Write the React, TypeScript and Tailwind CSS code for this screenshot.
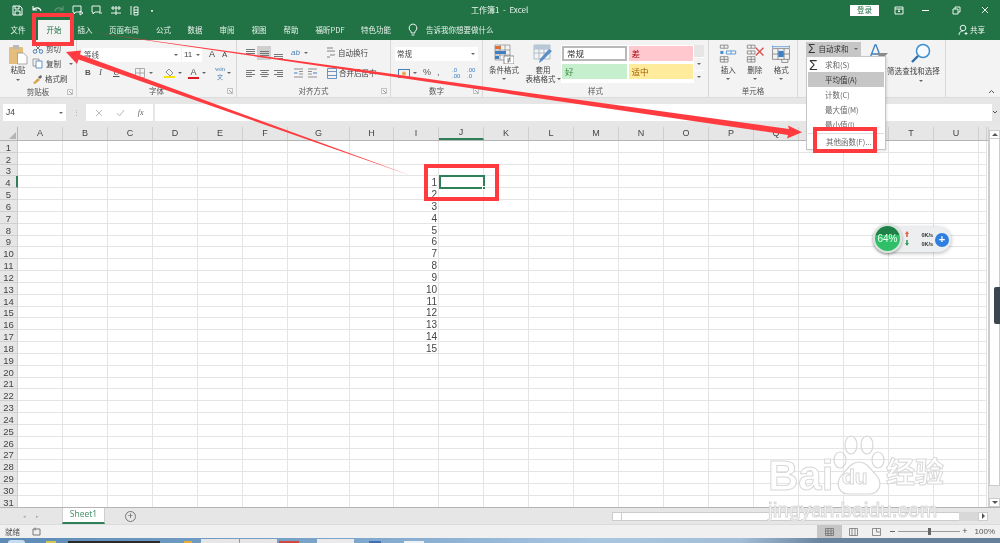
import React from "react";

const CJK = "font-['Noto_Sans_CJK_SC','Liberation_Sans',sans-serif]";
const colLabels = "ABCDEFGHIJKLMNOPQRSTUV".split("");
const colWidths = [45, 45, 45, 45, 45, 45, 62, 44, 45, 45, 45, 45, 45, 45, 45, 45, 45, 45, 45, 45, 45, 8];

const Ico = ({ w = 12, h = 12, children }: { w?: number; h?: number; children: React.ReactNode }) => (
  <svg width={w} height={h} viewBox={`0 0 ${w} ${h}`} fill="none" className="shrink-0">{children}</svg>
);

const Caret = () => <span className="inline-block w-0 h-0 border-x-[2px] border-x-transparent border-t-[2px] border-t-[#666]" />;

const Tab = ({ w, label }: { w: string; label: string }) => (
  <div className={`${w} h-full flex items-center justify-center text-[7.5px] text-[#e8f2ec] whitespace-nowrap`}>{label}</div>
);

const QA = ({ children, w = "w-[19px]" }: { children: React.ReactNode; w?: string }) => (
  <div className={`${w} shrink-0 flex items-center justify-center`}>{children}</div>
);

const GroupLabel = ({ children, launcher = true }: { children: React.ReactNode; launcher?: boolean }) => (
  <div className="h-[13px] shrink-0 relative flex items-center justify-center text-[7.5px] text-[#555]">
    {children}
    {launcher && (
      <span className="absolute right-[3px] top-[4px]">
        <Ico w={6} h={6}><path d="M0.5 0.5h5v5h-5z" stroke="#aaa" strokeWidth="0.7" /><path d="M2 2l3 3" stroke="#777" strokeWidth="0.7" /></Ico>
      </span>
    )}
  </div>
);

const Lines = ({ kind }: { kind: "l" | "c" | "r" | "t" | "m" | "b" }) => {
  const ys = kind === "t" ? [1, 3, 5] : kind === "m" ? [3, 5, 7] : kind === "b" ? [6, 8, 10] : [2, 4, 6, 8];
  return (
    <Ico w={11} h={11}>
      {ys.map((y, i) => {
        const short = i % 2 === 1;
        const x1 = kind === "r" && short ? 4 : kind === "c" && short ? 2.5 : 1;
        const x2 = kind === "l" && short ? 7 : kind === "c" && short ? 8.5 : 10;
        return <path key={y} d={`M${x1} ${y + 0.5}H${x2}`} stroke="#777" strokeWidth="1" />;
      })}
    </Ico>
  );
};

const CellIcon = ({ kind }: { kind: "i" | "d" | "f" }) => (
  <svg width="20" height="20" viewBox="0 0 26 26" fill="none">
    {kind !== "f" ? (
      <>
        <path d="M3 1.5h10v4H3zM8 1.5v4M3 16.5h10v7H3zM3 20h10M8 16.5v7" stroke="#777" strokeWidth="1" />
        {kind === "i" ? (
          <>
            <path d="M3 9h4v4H3z" fill="#4a8fd0" />
            <path d="M11 9h12v4H11zM17 9v4" stroke="#4a8fd0" strokeWidth="1.1" />
          </>
        ) : (
          <>
            <path d="M3 9h10v4H3zM8 9v4" stroke="#777" strokeWidth="1" />
            <path d="M14 5l10 10M24 5l-10 10" stroke="#d9534f" strokeWidth="1.8" />
          </>
        )}
      </>
    ) : (
      <>
        <path d="M2 2v3M24 2v3M2 3.5h22" stroke="#4a8fd0" strokeWidth="1" />
        <path d="M2 6h22v14H2zM2 13h22M9 6v14M17 6v14M14 20v4h8v-4" stroke="#777" strokeWidth="1" />
        <rect x="9.5" y="9" width="7" height="8" fill="#3f7fc4" />
      </>
    )}
  </svg>
);

const BigCellBtn = ({ kind, label }: { kind: "i" | "d" | "f"; label: string }) => (
  <div className="w-[26.5px] flex flex-col items-center">
    <CellIcon kind={kind} />
    <span className="text-[7.5px] leading-[10px] text-[#444] mt-[1px]">{label}</span>
    <span className="mt-[3px] flex"><Caret /></span>
  </div>
);

const Style = ({ cls, label }: { cls: string; label: string }) => (
  <div className={`h-[15px] flex items-center pl-[3px] text-[8.5px] ${cls}`}>{label}</div>
);

const MenuItem = ({ label, active }: { label: string; active?: boolean }) => (
  <div className={`h-[15px] mx-[1px] pl-[17px] flex items-center text-[7.5px] whitespace-nowrap ${active ? "bg-[#c6c6c6] text-[#333]" : "text-[#666]"}`}>{label}</div>
);

export default function App() {
  return (
    <div className={`relative w-[1000px] h-[543px] overflow-hidden flex flex-col bg-white ${CJK} blur-[0.5px]`}>
      {/* title bar */}
      <div className="h-[20px] shrink-0 bg-[#217346] flex items-center text-[#eef5f0]">
        <div className="w-[8px]" />
        <div className="flex items-center w-[163px]">
          <QA><Ico w={11} h={11}><path d="M1 1h7l2 2v7H1zM3 1v3h4V1M3 10V6h5v4" stroke="#fff" strokeWidth="1" /></Ico></QA>
          <QA><Ico w={12} h={10}><path d="M2 1v4h4M2 5c2-3 7-3 8 1" stroke="#fff" strokeWidth="1.1" /></Ico></QA>
          <div className="w-[3px]" />
          <QA><Ico w={12} h={10}><path d="M10 1v4H6M10 5C8 2 3 2 2 6" stroke="#5f9478" strokeWidth="1.1" /></Ico></QA>
          <QA><Ico w={12} h={11}><path d="M1 1h8v6H4L2 9V7H1zM8 6l3 2-3 2z" stroke="#fff" strokeWidth="0.9" /></Ico></QA>
          <QA><Ico w={12} h={11}><path d="M1 1h8v6H4L2 9V7H1zM8 8h3" stroke="#fff" strokeWidth="0.9" /></Ico></QA>
          <QA><Ico w={12} h={11}><path d="M1 3h10M1 8h10M6 1v9M3 1v4M9 1v4" stroke="#fff" strokeWidth="0.9" /></Ico></QA>
          <QA w="w-[18px]"><Ico w={10} h={11}><path d="M2 1v9M5 2h4v8H5zM5 5h4M5 7.500h4" stroke="#fff" strokeWidth="0.9" /></Ico></QA>
          <QA w="w-[18px]"><span className="text-[6px]">▪</span></QA>
        </div>
        <div className="w-[300px]" />
        <div className="text-[8px] w-[70px] whitespace-nowrap">工作簿1 &nbsp;-&nbsp; Excel</div>
        <div className="flex-1" />
        <div className="w-[29px] h-[11px] bg-white text-[#217346] text-[7.5px] flex items-center justify-center mr-[14px]">登录</div>
        <div className="w-[12px] mr-[11px] flex justify-center"><Ico w={10} h={9}><path d="M1 1h8v7H1zM1 3h8M5 3v3M4 5l1 1 1-1" stroke="#fff" strokeWidth="0.9" /></Ico></div>
        <div className="w-[18px] mr-[13px] flex justify-center"><span className="w-[7px] h-[1px] bg-white" /></div>
        <div className="w-[18px] mr-[11px] flex justify-center"><Ico w={9} h={9}><path d="M1 3h5v5H1zM3 3V1h5v5H6" stroke="#fff" strokeWidth="0.9" /></Ico></div>
        <div className="w-[18px] mr-[6px] flex justify-center"><Ico w={8} h={8}><path d="M1 1l6 6M7 1L1 7" stroke="#fff" strokeWidth="0.9" /></Ico></div>
      </div>

      {/* tabs */}
      <div className="h-[20px] shrink-0 bg-[#217346] flex items-center">
        <Tab w="w-[36px] mr-[2px]" label="文件" />
        <div className="w-[32px] h-full bg-[#f3f3f3] flex items-center justify-center text-[7.5px] text-[#217346]">开始</div>
        <Tab w="w-[30px]" label="插入" />
        <Tab w="w-[48px]" label="页面布局" />
        <Tab w="w-[31px]" label="公式" />
        <Tab w="w-[32px]" label="数据" />
        <Tab w="w-[32px]" label="审阅" />
        <Tab w="w-[32px]" label="视图" />
        <Tab w="w-[32px]" label="帮助" />
        <Tab w="w-[46px]" label="福昕PDF" />
        <Tab w="w-[46px]" label="特色功能" />
        <div className="w-[8px]" />
        <Ico w={12} h={14}><path d="M6 1a4 4 0 0 0-2.500 7c.6.6.8 1 .8 2h3.400c0-1 .2-1.400.8-2A4 4 0 0 0 6 1zM4.500 12h3" stroke="#fff" strokeWidth="0.9" /></Ico>
        <div className="ml-[7px] text-[7.5px] text-[#e8f2ec] whitespace-nowrap">告诉我你想要做什么</div>
        <div className="flex-1" />
        <Ico w={11} h={12}><circle cx="5" cy="4" r="2.800" stroke="#fff" strokeWidth="0.9" /><path d="M1 11c0-3 2-4 4-4M8 8v3M6.500 9.500h3" stroke="#fff" strokeWidth="0.9" /></Ico>
        <div className="ml-[1px] mr-[15px] text-[7.5px] text-[#eef5f0]">共享</div>
      </div>

      {/* ribbon */}
      <div className="h-[58px] shrink-0 bg-[#f3f3f3] border-b border-[#dcdcdc] flex text-[#444]">
        {/* clipboard */}
        <div className="w-[77px] shrink-0 border-r border-[#d8d8d8] flex flex-col">
          <div className="flex-1 flex">
            <div className="w-[36px] flex flex-col items-center pt-[4px]">
              <svg width="20" height="21" viewBox="0 0 20 21" fill="none">
                <rect x="1" y="3" width="14" height="17" rx="1" fill="#e5be7c" />
                <rect x="5" y="1" width="6" height="4" fill="#b9b9b9" />
                <path d="M9.500 9h6l3.500 3.500V20H9.500z" fill="#fff" stroke="#888" strokeWidth="0.7" />
              </svg>
              <span className="text-[7.5px] leading-[10px]">粘贴</span>
              <span className="flex mt-[4px]"><Caret /></span>
            </div>
            <div className="flex flex-col pt-[2px] gap-[2px] text-[7.5px] whitespace-nowrap -ml-[4px]">
              <div className="h-[13px] flex items-center gap-[2px]"><Ico w={12} h={10}><circle cx="3" cy="7.500" r="1.800" stroke="#4a7fb5" /><circle cx="9" cy="7.500" r="1.800" stroke="#4a7fb5" /><path d="M4 6l5-5M8 6L3 1" stroke="#777" /></Ico>剪切</div>
              <div className="h-[13px] flex items-center gap-[2px]"><Ico w={12} h={11}><path d="M1 1h6v7H1z" stroke="#888" strokeWidth="0.8" /><path d="M4 3h6v7H4z" fill="#fff" stroke="#4a7fb5" strokeWidth="0.8" /></Ico>复制<span className="ml-[6px] flex"><Caret /></span></div>
              <div className="h-[13px] flex items-center gap-[2px]"><Ico w={11} h={10}><path d="M1 9l5-5 2 2-5 4z" fill="#d9a04e" /><path d="M6 3l3-2 1 2-2 2z" fill="#666" /></Ico>格式刷</div>
            </div>
          </div>
          <GroupLabel>剪贴板</GroupLabel>
        </div>

        {/* font */}
        <div className="w-[160px] shrink-0 border-r border-[#d8d8d8] flex flex-col">
          <div className="flex-1 pl-[5px] pt-[7px] flex flex-col">
            <div className="flex items-center h-[15px]">
              <div className="w-[99px] h-[14px] bg-white flex items-center justify-between pl-[2px] pr-[3px] text-[7.5px] text-[#555]">等线<Caret /></div>
              <div className="w-[20px] ml-[1px] h-[14px] bg-white flex items-center justify-between px-[2px] text-[8px] font-['Liberation_Sans']">11<Caret /></div>
              <span className="ml-[7px] text-[9px] font-['Liberation_Sans']">A</span>
              <span className="ml-[7px] text-[8px] font-['Liberation_Sans']">A</span>
            </div>
            <div className="flex items-center h-[18px] mt-[2px] text-[9px] font-['Liberation_Serif'] text-[#555]">
              <span className="w-[14px] ml-[3px] font-bold font-['Liberation_Sans'] text-[8px]">B</span>
              <span className="w-[14px] italic">I</span>
              <span className="w-[22px] underline">U</span>
              <span className="mr-[4px]"><Ico w={10} h={10}><path d="M.5.500h9v9h-9zM5 .500v9M.5 5h9" stroke="#999" strokeWidth="0.8" /></Ico></span>
              <Caret />
              <span className="ml-[11px] mr-[3px] flex flex-col items-center"><Ico w={11} h={8}><path d="M5 1l4 4-3 3-4-4z" stroke="#777" strokeWidth="0.8" /></Ico><span className="w-[11px] h-[2px] bg-[#f5e50b]" /></span>
              <Caret />
              <span className="ml-[6px] mr-[3px] flex flex-col items-center font-['Liberation_Sans'] text-[9px] leading-[8px]">A<span className="w-[11px] h-[2px] mt-[1px] bg-[#e0181f]" /></span>
              <Caret />
              <span className="ml-[9px] mr-[2px] text-[6px] leading-[7px] flex flex-col items-center text-[#4a7fb5]"><span>wén</span><span className={CJK}>文</span></span>
              <Caret />
            </div>
          </div>
          <GroupLabel>字体</GroupLabel>
        </div>

        {/* alignment */}
        <div className="w-[154px] shrink-0 border-r border-[#d8d8d8] flex flex-col">
          <div className="flex-1 pl-[6px] pt-[5px] flex flex-col">
            <div className="flex items-center h-[16px]">
              <span className="w-[14px] h-[14px] flex items-center justify-center"><Lines kind="t" /></span>
              <span className="w-[14px] h-[14px] flex items-center justify-center bg-[#cfcfcf]"><Lines kind="m" /></span>
              <span className="w-[14px] h-[14px] flex items-center justify-center"><Lines kind="b" /></span>
              <span className="ml-[6px] w-[13px] text-[8px] italic text-[#4a7fb5] font-['Liberation_Sans']">ab</span>
              <Caret />
              <span className="ml-[18px] mr-[3px]"><Ico w={9} h={12}><path d="M1 1h6M1 4h7a2 2 0 0 1 0 4H4M1 10h3" stroke="#777" strokeWidth="0.9" /></Ico></span>
              <span className="text-[7.5px] whitespace-nowrap">自动换行</span>
            </div>
            <div className="flex items-center h-[18px] mt-[3px]">
              <span className="w-[14px] flex justify-center"><Lines kind="l" /></span>
              <span className="w-[14px] flex justify-center"><Lines kind="c" /></span>
              <span className="w-[14px] flex justify-center"><Lines kind="r" /></span>
              <span className="ml-[6px] w-[14px] flex justify-center"><Ico w={11} h={10}><path d="M1 1h9M6 3.500h4M6 6h4M1 9h9" stroke="#777" strokeWidth="0.8" /><path d="M4.500 5H1" stroke="#3f7fc4" /></Ico></span>
              <span className="w-[14px] flex justify-center"><Ico w={11} h={10}><path d="M1 1h9M1 3.500h4M1 6h4M1 9h9" stroke="#777" strokeWidth="0.8" /><path d="M6 5h4" stroke="#3f7fc4" /></Ico></span>
              <span className="ml-[8px] mr-[2px]"><Ico w={10} h={11}><path d="M.5.500h9v10h-9zM.5 3.500h9M.5 7.500h9" stroke="#4a7fb5" strokeWidth="0.8" /></Ico></span>
              <span className="text-[7.5px] whitespace-nowrap">合并后居中</span>
            </div>
          </div>
          <GroupLabel>对齐方式</GroupLabel>
        </div>

        {/* number */}
        <div className="w-[92px] shrink-0 border-r border-[#d8d8d8] flex flex-col">
          <div className="flex-1 pl-[4px] pt-[7px] flex flex-col">
            <div className="w-[83px] h-[14px] bg-white flex items-center justify-between pl-[2px] pr-[3px] text-[7.5px]">常规<Caret /></div>
            <div className="flex items-center h-[18px] mt-[3px] text-[9px] text-[#555] font-['Liberation_Sans']">
              <span className="ml-[3px] mr-[3px]"><Ico w={12} h={9}><rect x=".5" y=".5" width="11" height="8" stroke="#4a7fb5" /><circle cx="6" cy="4.500" r="2" fill="#e3b04b" /></Ico></span>
              <Caret />
              <span className="ml-[6px] w-[14px]">%</span>
              <span className="w-[15px]">,</span>
              <span className="w-[15px] text-[6px] leading-[6px] text-[#3f7fc4]">.0<br />.00</span>
              <span className="w-[12px] text-[6px] leading-[6px] text-[#3f7fc4]">.00<br />.0</span>
            </div>
          </div>
          <GroupLabel>数字</GroupLabel>
        </div>

        {/* styles */}
        <div className="w-[226px] shrink-0 border-r border-[#d8d8d8] flex flex-col">
          <div className="flex-1 flex">
            <div className="w-[42px] flex flex-col items-center pt-[4px]">
              <svg width="20" height="20" viewBox="0 0 20 20" fill="none">
                <path d="M1 1h15v15H1zM6 1v15M11 1v15M1 6h15M1 11h15" stroke="#888" strokeWidth="0.7" />
                <rect x="1" y="2" width="6" height="3" fill="#e0703a" /><rect x="1" y="7" width="11" height="3" fill="#3f7fc4" /><rect x="1" y="12" width="4" height="3" fill="#3f7fc4" />
                <rect x="10" y="12" width="10" height="8" fill="#fff" stroke="#666" strokeWidth="0.7" /><path d="M13 15h4M13 17h4M16 13l-2 6" stroke="#444" strokeWidth="0.6" />
              </svg>
              <span className="text-[7.5px] leading-[10px] mt-[1px] whitespace-nowrap">条件格式</span>
              <span className="mt-[3px] flex"><Caret /></span>
            </div>
            <div className="w-[36px] flex flex-col items-center pt-[4px]">
              <svg width="20" height="20" viewBox="0 0 20 20" fill="none">
                <path d="M1 1h16v14H1zM1 5h16M1 9h16M6 1v14M11 1v14" stroke="#9ab" strokeWidth="0.7" />
                <rect x="1" y="1" width="16" height="4" fill="#b8c7d8" />
                <path d="M19 7L9 17l-3 2 1-4L16 5z" fill="#5b8fc7" />
              </svg>
              <span className="text-[7.5px] leading-[9px] mt-[1px] whitespace-nowrap">套用</span>
              <span className="text-[7.5px] leading-[9px] whitespace-nowrap flex items-center gap-[1px]">表格格式<Caret /></span>
            </div>
            <div className="mt-[5px] h-[38px] w-[133px] bg-white grid grid-cols-2 gap-x-[2px] gap-y-[3px] p-[1px] content-start">
              <Style cls="border-2 border-[#b8b8b8] bg-white text-[#333]" label="常规" />
              <Style cls="bg-[#ffc7ce] text-[#9c0006]" label="差" />
              <Style cls="bg-[#c6efce] text-[#3c8a3f]" label="好" />
              <Style cls="bg-[#ffeb9c] text-[#9c5700]" label="适中" />
            </div>
            <div className="mt-[5px] w-[10px] h-[38px] flex flex-col gap-[1px] bg-white">
              <div className="flex-1 bg-[#e6e6e6]" /><div className="flex-1 bg-[#f3f3f3] flex items-center justify-center"><Caret /></div><div className="flex-1 bg-[#f3f3f3] flex items-center justify-center"><Caret /></div>
            </div>
          </div>
          <GroupLabel launcher={false}>样式</GroupLabel>
        </div>

        {/* cells */}
        <div className="w-[89px] shrink-0 border-r border-[#d8d8d8] flex flex-col">
          <div className="flex-1 flex pt-[4px] pl-[6px]">
            <BigCellBtn kind="i" label="插入" />
            <BigCellBtn kind="d" label="删除" />
            <BigCellBtn kind="f" label="格式" />
          </div>
          <GroupLabel launcher={false}>单元格</GroupLabel>
        </div>

        {/* editing */}
        <div className="w-[148px] shrink-0 border-r border-[#d8d8d8] flex pl-[66px] pt-[3px]">
          <div className="flex flex-col items-start w-[28px] shrink-0 text-[7.5px]">
            <svg width="22" height="18" viewBox="0 0 22 18" fill="none" className="ml-[3px]">
              <path d="M3 15L8 2h1l5 13M5 11h7" stroke="#3f7fc4" strokeWidth="1.300" />
              <path d="M9 10h12l-5 5v2h-2v-2z" fill="#8a8a8a" />
            </svg>
            <span className="mt-[4px] ml-[23px] whitespace-nowrap">筛选</span>
          </div>
          <div className="flex flex-col items-center w-[54px] shrink-0 ml-[2px] text-[7.5px]">
            <svg width="20" height="20" viewBox="0 0 20 20" fill="none">
              <circle cx="12" cy="8" r="6.500" stroke="#3f8fd0" strokeWidth="1.500" fill="#f7fbff" />
              <path d="M7 13l-6 6" stroke="#2e6ea8" strokeWidth="2.400" />
            </svg>
            <span className="mt-[2px] whitespace-nowrap">查找和选择</span>
            <span className="mt-[4px] flex"><Caret /></span>
          </div>
        </div>
        <div className="flex-1 flex items-end justify-center pb-[3px] pl-[36px]">
          <Ico w={7} h={5}><path d="M1 4l2.500-2.500L6 4" stroke="#555" /></Ico>
        </div>
      </div>

      {/* formula bar */}
      <div className="h-[29px] shrink-0 bg-[#e6e6e6] flex items-center pl-[3px] pr-[8px]">
        <div className="w-[63px] h-[17px] bg-white flex items-center justify-between px-[3px] text-[8.5px] text-[#444] font-['Liberation_Sans']">J4<Caret /></div>
        <div className="w-[20px] text-center text-[7px] text-[#aaa] leading-[3px]">⋮</div>
        <div className="w-[67px] h-[17px] bg-white flex items-center justify-around px-[3px]">
          <Ico w={8} h={8}><path d="M1 1l6 6M7 1L1 7" stroke="#bbb" /></Ico>
          <Ico w={9} h={8}><path d="M1 4l2.500 3L8 1" stroke="#bbb" /></Ico>
          <span className="text-[8px] italic text-[#666] font-['Liberation_Serif']">fx</span>
        </div>
        <div className="flex-1 ml-[2px] h-[17px] bg-white" />
        <div className="w-[0px] relative">
          <span className="absolute right-[-6px] top-[-3px]"><Ico w={6} h={5}><path d="M1 1l2 2 2-2" stroke="#555" /></Ico></span>
        </div>
      </div>

      {/* sheet */}
      <div className="flex-1 min-h-0 flex relative">
        <div className="w-[988px] shrink-0 flex flex-col overflow-hidden">
          <div className="h-[14px] shrink-0 flex bg-[#e6e6e6] border-b border-[#b4b4b4] text-[9px] text-[#444] font-['Liberation_Sans']">
            <div className="w-[18px] shrink-0 border-r border-[#b4b4b4] flex items-end justify-end pr-[1px] pb-[1px]">
              <span className="w-0 h-0 border-l-[7px] border-l-transparent border-b-[7px] border-b-[#b4b4b4]" />
            </div>
            {colLabels.map((c, i) => (
              <div key={c} style={{ width: colWidths[i] }} className={`shrink-0 border-r border-[#cfcfcf] flex items-center justify-center ${c === "J" ? "border-b-2 border-b-[#2f8058]" : ""}`}>
                {colWidths[i] > 10 ? c : ""}
              </div>
            ))}
          </div>
          <div className="flex-1 min-h-0 overflow-hidden">
            {Array.from({ length: 31 }, (_, r) => (
              <div key={r} className="h-[11.83px] flex">
                <div className={`w-[18px] shrink-0 bg-[#e6e6e6] border-b border-r border-[#cfcfcf] flex items-end justify-center text-[9.5px] leading-[9px] font-['Liberation_Sans'] text-[#444] ${r === 3 ? "border-r-2 border-r-[#2f8058]" : ""}`}>{r + 1}</div>
                {colWidths.map((w, c) => (
                  <div key={c} style={{ width: w }} className="shrink-0 border-b border-r border-[#e4e4e4] flex items-end justify-end pr-[1px] text-[10px] leading-[9px] text-[#444] font-['Liberation_Sans']">
                    {c === 8 && r >= 3 && r <= 17 ? r - 2 : ""}
                  </div>
                ))}
              </div>
            ))}
          </div>
        </div>
        {/* vertical scrollbar */}
        <div className="flex-1 flex flex-col bg-[#e8e8e8] border-l border-[#cfcfcf] pt-[3px]">
          <div className="h-[9px] flex items-center justify-center bg-white border border-[#ccc]"><span className="w-0 h-0 border-x-[3px] border-x-transparent border-b-[3px] border-b-[#555]" /></div>
          <div className="h-[347px] bg-white border-x border-b border-[#ccc]" />
          <div className="flex-1" />
          <div className="h-[9px] flex items-center justify-center bg-white border border-[#ccc]"><span className="w-0 h-0 border-x-[3px] border-x-transparent border-t-[3px] border-t-[#555]" /></div>
        </div>
        {/* selected cell J4 */}
        <div className="absolute left-[439px] top-[48px] w-[46px] h-[14px] border-2 border-[#2f8058]">
          <span className="absolute right-[-3px] bottom-[-3px] w-[4px] h-[4px] bg-[#2f8058] border border-white" />
        </div>
      </div>

      {/* sheet tabs */}
      <div className="h-[17px] shrink-0 bg-[#e6e6e6] border-t border-[#b4b4b4] flex items-center">
        <div className="w-[62px] flex justify-center gap-[10px] text-[5px] text-[#aaa]"><span>◂</span><span>▸</span></div>
        <div className="w-[43px] h-[16px] -mt-[1px] bg-white border-x border-[#cfcfcf] border-b-2 border-b-[#2f8058] flex items-center justify-center text-[8.5px] text-[#4f9470] font-['Noto_Sans']">Sheet1</div>
        <div className="ml-[20px] w-[11px] h-[11px] rounded-full border border-[#777] flex items-center justify-center text-[9px] leading-none text-[#555] font-['Liberation_Sans']">+</div>
        <div className="flex-1" />
        <div className="w-[376px] h-[9px] flex items-center mr-[12px]">
          <div className="w-[10px] h-full bg-white border border-[#ccc]" />
          <div className="w-[337px] h-full bg-white border-y border-[#ccc]" />
          <div className="flex-1 bg-[#d8d8d8] h-full" />
          <div className="w-[10px] h-full bg-white border border-[#ccc] flex items-center justify-center"><span className="w-0 h-0 border-y-[3px] border-y-transparent border-l-[3px] border-l-[#555]" /></div>
        </div>
      </div>

      {/* status bar */}
      <div className="h-[14px] shrink-0 bg-[#f0f0f0] border-t border-[#dcdcdc] flex items-center text-[7.5px] text-[#555]">
        <span className="ml-[5px]">就绪</span>
        <span className="ml-[12px]"><Ico w={9} h={9}><path d="M1 2h7v6H1zM3 .500v3" stroke="#777" /></Ico></span>
        <div className="flex-1" />
        <div className="w-[25px] h-full bg-[#c6c6c6] flex items-center justify-center"><Ico w={9} h={8}><path d="M.5.500h8v7h-8zM.5 3h8M.5 5.500h8M3 .500v7M6 .500v7" stroke="#666" strokeWidth="0.7" /></Ico></div>
        <div className="w-[22px] flex justify-center"><Ico w={9} h={8}><path d="M.5.500h8v7h-8zM3 .500v7M6 .500v7" stroke="#666" strokeWidth="0.7" /></Ico></div>
        <div className="w-[24px] flex justify-center"><Ico w={9} h={8}><path d="M.5.500h8v7h-8zM4.500.500v3.500H8" stroke="#666" strokeWidth="0.7" /></Ico></div>
        <span className="ml-[2px] w-[5px] h-[1px] bg-[#666]" />
        <div className="ml-[3px] w-[62px] h-[1px] bg-[#999] relative"><span className="absolute left-[30px] top-[-3px] w-[3px] h-[7px] bg-[#666]" /></div>
        <span className="ml-[2px] text-[9px] font-['Liberation_Sans']">+</span>
        <span className="ml-[7px] mr-[5px] text-[8px] font-['Liberation_Sans']">100%</span>
      </div>

      {/* taskbar sliver */}
      <div className="h-[5px] shrink-0 flex items-end bg-[linear-gradient(90deg,#5d8bb5,#7ea6cc_35%,#a9c6e0_60%,#a3bdd6_74%,#6b84a0_82%,#66809c)]">
        <span className="ml-[8px] w-[17px] h-[3px] rounded-t-full bg-[#c8dcf0]" />
        <span className="ml-[21px] w-[10px] h-[2px] bg-[#d8c850]" />
        <span className="ml-[12px] w-[92px] h-[2px] bg-[#2a2a2a]" />
        <span className="ml-[24px] w-[8px] h-[2px] bg-[#e8b030]" />
        <span className="ml-[9px] w-[38px] h-[4px] bg-[#e6e6e6]" />
        <span className="ml-[1px] w-[37px] h-[4px] bg-[#e6e6e6]" />
        <span className="ml-[2px] w-[20px] h-[2px] bg-[#d04a3a]" />
        <span className="ml-[18px] w-[37px] h-[4px] bg-[#eaeaea]" />
        <span className="ml-[15px] w-[12px] h-[2px] bg-[#3f6fb5]" />
        <span className="ml-[23px] w-[20px] h-[2px] bg-[#f0f0f0]" />
      </div>

      {/* ===== overlays ===== */}
      {/* AutoSum split button + menu */}
      <div className="absolute left-[806px] top-[42px] w-[55px] h-[14px] bg-[#c6c6c6] flex items-center text-[7.5px] text-[#333] pl-[2px] whitespace-nowrap">
        <span className="text-[12px] leading-none mr-[3px] font-['Liberation_Sans']">Σ</span>自动求和<span className="ml-[6px] flex"><Caret /></span>
      </div>
      <div className="absolute left-[806px] top-[56px] w-[80px] h-[94px] bg-white border border-[#c6c6c6] shadow-[1px_1px_2px_rgba(0,0,0,0.12)]">
        <MenuItem label="求和(S)" />
        <MenuItem label="平均值(A)" active />
        <MenuItem label="计数(C)" />
        <MenuItem label="最大值(M)" />
        <MenuItem label="最小值(I)" />
        <div className="border-t border-[#ddd] mx-[1px] mt-[1px]"><MenuItem label="其他函数(F)..." /></div>
        <span className="absolute left-[2px] top-[1px] text-[14px] leading-none text-[#333] font-['Liberation_Sans']">Σ</span>
      </div>

      {/* network widget */}
      <div className="absolute left-[875px] top-[227px] w-[76px] h-[25px] rounded-full bg-[#eceef0] shadow-[0_1px_4px_rgba(0,0,0,0.3)] flex items-center justify-end pr-[2px]">
        <div className="flex flex-col items-end text-[5.5px] leading-[9px] font-bold text-[#333] font-['Liberation_Sans'] mr-[2px]">
          <span>0K/s</span><span>0K/s</span>
        </div>
        <span className="w-[14px] h-[14px] rounded-full bg-[#2f7fe0] flex items-center justify-center text-[11px] leading-none font-bold text-white font-['Liberation_Sans']">+</span>
        <span className="absolute left-[30px] top-[4px]"><Ico w={4} h={6}><path d="M2 0l2 3H2.800v3H1.200V3H0z" fill="#e0604a" /></Ico></span>
        <span className="absolute left-[30px] top-[13px]"><Ico w={4} h={6}><path d="M2 6L0 3h1.200V0h1.600v3H4z" fill="#2fa05a" /></Ico></span>
      </div>
      <div className="absolute left-[873px] top-[224px] w-[29px] h-[29px] rounded-full border-2 border-[#d8e4dc] bg-[linear-gradient(#1f8048_0_34%,#2fbf68_34%)] shadow-[0_1px_3px_rgba(0,0,0,0.4)] flex items-center justify-center text-[10px] text-[#e8fff0] font-['Liberation_Sans']">64%</div>

      {/* watermark */}
      <div className="absolute left-[766px] top-[452px] w-[185px] h-[72px] font-['Liberation_Sans'] text-white [-webkit-text-stroke:1px_#d8d8d8] pointer-events-none">
        <span className="absolute left-[2px] top-[3px] text-[42px] leading-none font-bold">Bai</span>
        <svg width="60" height="70" viewBox="0 0 60 70" className="absolute left-[60px] top-[-20px]" fill="none" stroke="#d8d8d8" strokeWidth="1.200">
          <ellipse cx="14" cy="28" rx="6" ry="8" /><ellipse cx="25" cy="13" rx="6" ry="9" /><ellipse cx="41" cy="13" rx="6" ry="9" /><ellipse cx="52" cy="28" rx="6" ry="8" />
          <path d="M33 30c-8 0-12 8-18 14-6 8-2 18 8 18h20c10 0 14-10 8-18-6-6-10-14-18-14z" fill="#fff" />
        </svg>
        <span className="absolute left-[76px] top-[14px] text-[21px] leading-none font-bold">du</span>
        <span className={`absolute left-[120px] top-[4px] text-[29px] leading-none ${CJK} font-bold`}>经验</span>
        <span className="absolute left-[2px] top-[47px] text-[21px] leading-none whitespace-nowrap">jingyan.baidu.com</span>
      </div>

      {/* dark sliver on right edge */}
      <div className="absolute left-[994px] top-[287px] w-[6px] h-[37px] rounded-l-[2px] bg-[#3a4650]" />

      {/* red annotations */}
      <svg width="1000" height="543" viewBox="0 0 1000 543" className="absolute inset-0 pointer-events-none" fill="none">
        <polygon points="90,32 789,129 788,125.500 802,132.300 787,138.500 788,135" fill="#ff3b3f" />
        <polygon points="66,52 81,50.500 80,54.600 412,176 78.500,59.600 77,64" fill="#ff3b3f" />
        <rect x="34" y="15" width="38" height="29" stroke="#ff3b3f" strokeWidth="4" />
        <rect x="426" y="166" width="71" height="33" stroke="#ff3b3f" strokeWidth="4" />
        <rect x="815" y="129" width="60" height="22" stroke="#ff3b3f" strokeWidth="4" />
      </svg>
    </div>
  );
}
